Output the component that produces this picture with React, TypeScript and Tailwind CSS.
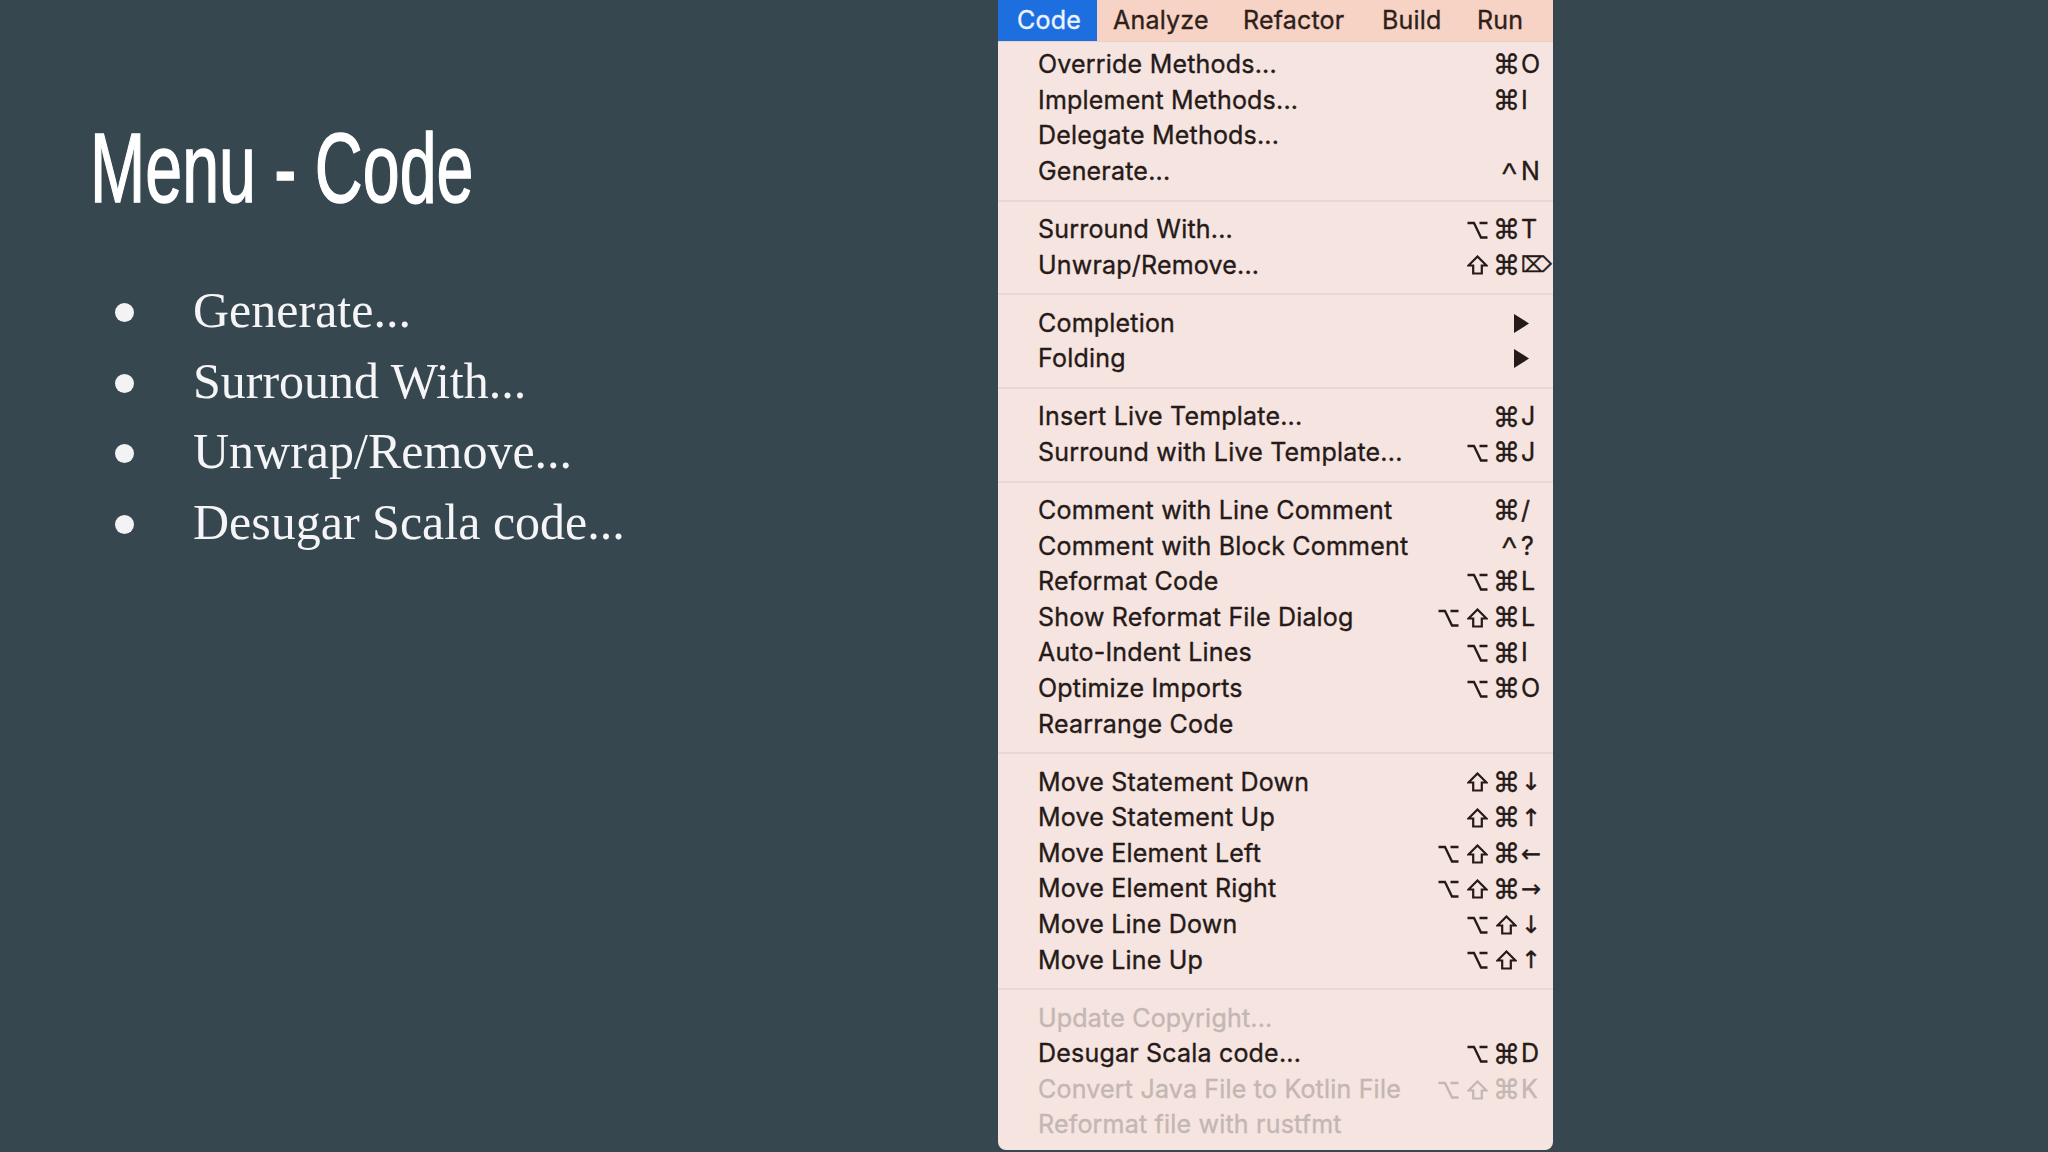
import React from "react";

type Item = { label: string; mods?: string; k?: string; disabled?: boolean; sub?: boolean };

const groups: Item[][] = [
  [
    { label: "Override Methods...", mods: "⌘", k: "O" },
    { label: "Implement Methods...", mods: "⌘", k: "I" },
    { label: "Delegate Methods..." },
    { label: "Generate...", mods: "^", k: "N" },
  ],
  [
    { label: "Surround With...", mods: "⌥⌘", k: "T" },
    { label: "Unwrap/Remove...", mods: "⇧⌘", k: "⌦" },
  ],
  [
    { label: "Completion", sub: true },
    { label: "Folding", sub: true },
  ],
  [
    { label: "Insert Live Template...", mods: "⌘", k: "J" },
    { label: "Surround with Live Template...", mods: "⌥⌘", k: "J" },
  ],
  [
    { label: "Comment with Line Comment", mods: "⌘", k: "/" },
    { label: "Comment with Block Comment", mods: "^", k: "?" },
    { label: "Reformat Code", mods: "⌥⌘", k: "L" },
    { label: "Show Reformat File Dialog", mods: "⌥⇧⌘", k: "L" },
    { label: "Auto-Indent Lines", mods: "⌥⌘", k: "I" },
    { label: "Optimize Imports", mods: "⌥⌘", k: "O" },
    { label: "Rearrange Code" },
  ],
  [
    { label: "Move Statement Down", mods: "⇧⌘", k: "↓" },
    { label: "Move Statement Up", mods: "⇧⌘", k: "↑" },
    { label: "Move Element Left", mods: "⌥⇧⌘", k: "←" },
    { label: "Move Element Right", mods: "⌥⇧⌘", k: "→" },
    { label: "Move Line Down", mods: "⌥⇧", k: "↓" },
    { label: "Move Line Up", mods: "⌥⇧", k: "↑" },
  ],
  [
    { label: "Update Copyright...", disabled: true },
    { label: "Desugar Scala code...", mods: "⌥⌘", k: "D" },
    { label: "Convert Java File to Kotlin File", mods: "⌥⇧⌘", k: "K", disabled: true },
    { label: "Reformat file with rustfmt", disabled: true },
  ],
];

function ShiftGlyph() {
  return (
    <svg width="21" height="20" viewBox="0 0 21 20" className="mx-auto">
      <path
        d="M10.5 1.5 L19.5 10.5 H14.8 V18.5 H6.2 V10.5 H1.5 Z"
        fill="none"
        stroke="currentColor"
        strokeWidth="2.2"
        strokeLinejoin="miter"
      />
    </svg>
  );
}

function OptionGlyph() {
  return (
    <svg width="21" height="18" viewBox="0 0 21 18" className="mx-auto">
      <path
        d="M0.5 2 H7 L14 16.5 H20.5 M12.5 2 H20.5"
        fill="none"
        stroke="currentColor"
        strokeWidth="2.3"
        strokeLinejoin="miter"
      />
    </svg>
  );
}

function Mod({ m }: { m: string }) {
  if (m === "⇧") {
    return (
      <span className="flex w-[29px] items-center justify-center">
        <ShiftGlyph />
      </span>
    );
  }
  if (m === "⌥") {
    return (
      <span className="flex w-[29px] items-center justify-center">
        <OptionGlyph />
      </span>
    );
  }
  if (m === "⌘") {
    return (
      <span className="w-[29px] text-center font-['DejaVu_Sans',sans-serif] text-[27px] leading-none">{m}</span>
    );
  }
  return (
    <span className="mt-[4px] w-[29px] pl-[6px] text-center font-['Liberation_Sans',sans-serif] text-[30px] leading-none">
      {m}
    </span>
  );
}

function Key({ k }: { k: string }) {
  if (k === "⌦") {
    return <span className="font-['DejaVu_Sans',sans-serif] text-[22px] leading-none">{k}</span>;
  }
  if (k === "↓" || k === "↑" || k === "←" || k === "→") {
    return <span className="font-['DejaVu_Sans',sans-serif] text-[24px] leading-none">{k}</span>;
  }
  return <span>{k}</span>;
}

function Row({ item }: { item: Item }) {
  const color = item.disabled ? "text-[#c4b6b3]" : "text-[#251a18]";
  return (
    <div className={`flex h-[35.6px] items-center pl-[40px] ${color}`}>
      <span className="flex-1 whitespace-nowrap">{item.label}</span>
      <span className="flex items-center justify-end">
        {Array.from(item.mods ?? "").map((m, i) => (
          <Mod key={i} m={m} />
        ))}
      </span>
      <span className="flex w-[32px] items-center">
        {item.sub ? (
          <svg width="17" height="19" viewBox="0 0 17 19" className="ml-[-8px]">
            <polygon points="1,0 16,9.5 1,19" fill="#251a18" />
          </svg>
        ) : item.k ? (
          <Key k={item.k} />
        ) : null}
      </span>
    </div>
  );
}

function Separator() {
  return (
    <div className="flex h-[22.5px] items-center">
      <div className="h-[2px] w-full bg-[#e8d8d4]" />
    </div>
  );
}

export default function App() {
  const bullets = ["Generate...", "Surround With...", "Unwrap/Remove...", "Desugar Scala code..."];
  return (
    <div className="flex h-[1152px] w-[2048px] overflow-hidden bg-[#37474f]">
      <div className="flex w-[998px] flex-none flex-col">
        <h1 className="ml-[90px] mt-[118px] w-fit origin-left scale-x-[0.67] font-['Liberation_Sans',sans-serif] text-[99px] font-normal leading-none text-white [-webkit-text-stroke:1.5px_white]">
          Menu - Code
        </h1>
        <ul className="mt-[58px] flex flex-col pl-[115px]">
          {bullets.map((b) => (
            <li key={b} className="flex h-[70.5px] items-center">
              <span className="mt-[5px] h-[19px] w-[19px] flex-none rounded-full bg-[#f3f3f5]" />
              <span className="ml-[59px] font-['Liberation_Serif',serif] text-[50px] leading-[70.5px] text-[#f5f5f7]">
                {b}
              </span>
            </li>
          ))}
        </ul>
      </div>
      <div className="flex h-[1150px] w-[555px] flex-none flex-col overflow-hidden rounded-b-[8px] bg-[#f5e4e0] font-['Inter','Liberation_Sans',sans-serif] text-[25px] tracking-[0.2px] [-webkit-text-stroke:0.35px_currentColor]">
        <div className="flex h-[42px] flex-none items-stretch border-b border-[#ecd0c6] bg-[#f7d3c5] text-[#2e1f1b]">
          <div className="flex w-[99px] items-center bg-[#1d6fe0] pl-[19px] text-[#eef4ff]">Code</div>
          <div className="flex w-[146px] items-center pl-[16px]">Analyze</div>
          <div className="flex w-[139px] items-center">Refactor</div>
          <div className="flex w-[95px] items-center">Build</div>
          <div className="flex items-center">Run</div>
        </div>
        <div className="flex flex-col pt-[5px]">
          {groups.map((g, gi) => (
            <React.Fragment key={gi}>
              {gi > 0 && <Separator />}
              {g.map((it) => (
                <Row key={it.label} item={it} />
              ))}
            </React.Fragment>
          ))}
        </div>
      </div>
      <div className="flex-1" />
    </div>
  );
}
